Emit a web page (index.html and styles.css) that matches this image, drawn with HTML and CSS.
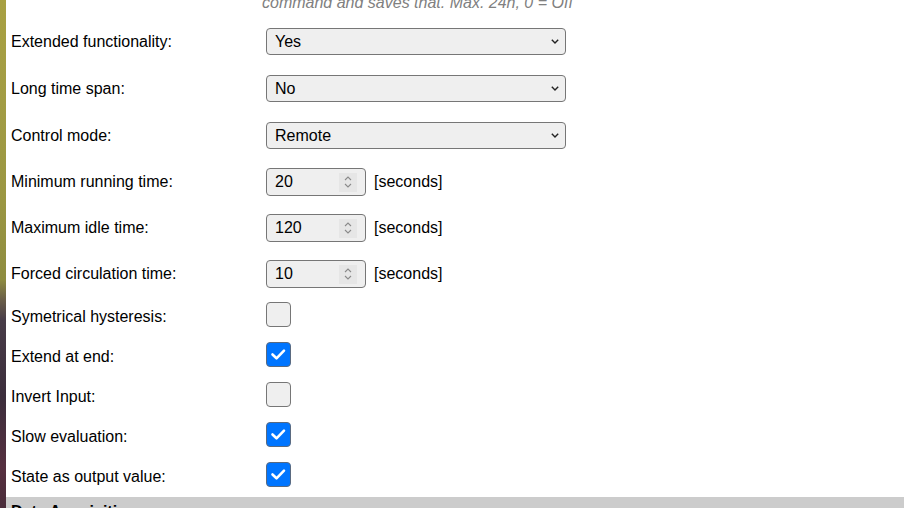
FILE: index.html
```html
<!DOCTYPE html>
<html>
<head>
<meta charset="utf-8">
<link rel="stylesheet" href="styles.css">
</head>
<body>
<div class="page">
  <div class="strip"></div>
  <div class="panel">
    <div class="hint">command and saves that. Max. 24h, 0 = Off</div>
    <div class="form">
      <div class="row row-select">
        <div class="label">Extended functionality:</div>
        <div class="select"><span>Yes</span><svg class="chev" width="8" height="5" viewBox="0 0 8 5"><path d="M0.8 0.8 L4 4 L7.2 0.8" fill="none" stroke="#222" stroke-width="1.4"/></svg></div>
      </div>
      <div class="row row-select">
        <div class="label">Long time span:</div>
        <div class="select"><span>No</span><svg class="chev" width="8" height="5" viewBox="0 0 8 5"><path d="M0.8 0.8 L4 4 L7.2 0.8" fill="none" stroke="#222" stroke-width="1.4"/></svg></div>
      </div>
      <div class="row row-select row-last-select">
        <div class="label">Control mode:</div>
        <div class="select"><span>Remote</span><svg class="chev" width="8" height="5" viewBox="0 0 8 5"><path d="M0.8 0.8 L4 4 L7.2 0.8" fill="none" stroke="#222" stroke-width="1.4"/></svg></div>
      </div>
      <div class="row row-num">
        <div class="label">Minimum running time:</div>
        <div class="ctrl">
          <div class="num"><span>20</span><span class="spin"><svg width="10" height="14" viewBox="0 0 10 14"><path d="M2 5 L5 2 L8 5 M2 9 L5 12 L8 9" fill="none" stroke="#8a8a8a" stroke-width="1.1"/></svg></span></div>
          <span class="unit">[seconds]</span>
        </div>
      </div>
      <div class="row row-num">
        <div class="label">Maximum idle time:</div>
        <div class="ctrl">
          <div class="num"><span>120</span><span class="spin"><svg width="10" height="14" viewBox="0 0 10 14"><path d="M2 5 L5 2 L8 5 M2 9 L5 12 L8 9" fill="none" stroke="#8a8a8a" stroke-width="1.1"/></svg></span></div>
          <span class="unit">[seconds]</span>
        </div>
      </div>
      <div class="row row-num row-last-num">
        <div class="label">Forced circulation time:</div>
        <div class="ctrl">
          <div class="num"><span>10</span><span class="spin"><svg width="10" height="14" viewBox="0 0 10 14"><path d="M2 5 L5 2 L8 5 M2 9 L5 12 L8 9" fill="none" stroke="#8a8a8a" stroke-width="1.1"/></svg></span></div>
          <span class="unit">[seconds]</span>
        </div>
      </div>
      <div class="row row-check">
        <div class="label">Symetrical hysteresis:</div>
        <span class="check"></span>
      </div>
      <div class="row row-check">
        <div class="label">Extend at end:</div>
        <span class="check checked"><svg width="25" height="25" viewBox="0 0 25 25"><path d="M6.5 12.5 L10.5 16.3 L18 8.7" fill="none" stroke="#fff" stroke-width="2.6" stroke-linecap="round" stroke-linejoin="round"/></svg></span>
      </div>
      <div class="row row-check">
        <div class="label">Invert Input:</div>
        <span class="check"></span>
      </div>
      <div class="row row-check">
        <div class="label">Slow evaluation:</div>
        <span class="check checked"><svg width="25" height="25" viewBox="0 0 25 25"><path d="M6.5 12.5 L10.5 16.3 L18 8.7" fill="none" stroke="#fff" stroke-width="2.6" stroke-linecap="round" stroke-linejoin="round"/></svg></span>
      </div>
      <div class="row row-check row-last-check">
        <div class="label">State as output value:</div>
        <span class="check checked"><svg width="25" height="25" viewBox="0 0 25 25"><path d="M6.5 12.5 L10.5 16.3 L18 8.7" fill="none" stroke="#fff" stroke-width="2.6" stroke-linecap="round" stroke-linejoin="round"/></svg></span>
      </div>
    </div>
    <div class="section">Data Acquisition</div>
  </div>
</div>
</body>
</html>
```
FILE: styles.css
```css
html, body {
  margin: 0;
  padding: 0;
  height: 100%;
  overflow: hidden;
}
body {
  font-family: "Liberation Sans", Arial, sans-serif;
  font-size: 16px;
  color: #000;
  background: #fff;
}
.page {
  display: flex;
  height: 508px;
}
.strip {
  width: 6px;
  flex: none;
  background: linear-gradient(to bottom, #a8a042 0%, #a29c44 20%, #9a9642 40%, #8e8c40 55%, #6a5e48 59%, #483c48 63%, #3c2e3c 78%, #563040 92%, #4a2c3a 100%);
}
.panel {
  flex: 1;
  background: #fff;
  display: flex;
  flex-direction: column;
  overflow: hidden;
}
.hint {
  font-style: italic;
  color: #808080;
  line-height: 18px;
  margin-top: -6px;
  padding-left: 256px;
  white-space: nowrap;
}
.form {
  padding-left: 5px;
  padding-top: 16px;
  display: flex;
  flex-direction: column;
}
.row {
  display: grid;
  grid-template-columns: 255px 1fr;
  align-items: center;
}
.label {
  line-height: 18px;
}
.row-select {
  margin-bottom: 20px;
}
.row-last-select {
  margin-bottom: 19px;
}
.row-num {
  margin-bottom: 18px;
}
.row-last-num {
  margin-bottom: 14px;
}
.row-check {
  margin-bottom: 15px;
}
.row-check .label {
  padding-top: 5px;
}
.row-last-check {
  margin-bottom: 10px;
}
.select {
  box-sizing: border-box;
  width: 300px;
  height: 27px;
  border: 1px solid #767676;
  border-radius: 4px;
  background: #efefef;
  display: flex;
  align-items: center;
  justify-content: space-between;
  padding: 0 6px 0 8px;
  line-height: 18px;
}
.chev {
  display: block;
}
.ctrl {
  display: flex;
  align-items: center;
  gap: 8px;
}
.num {
  box-sizing: border-box;
  width: 100px;
  height: 28px;
  border: 1px solid #767676;
  border-radius: 4px;
  background: #efefef;
  display: flex;
  align-items: center;
  justify-content: space-between;
  padding: 0 8px 0 8px;
  line-height: 18px;
}
.spin {
  width: 18px;
  height: 19px;
  background: #e6e6e6;
  display: flex;
  align-items: center;
  justify-content: center;
}
.spin svg {
  display: block;
}
.unit {
  line-height: 18px;
}
.check {
  box-sizing: border-box;
  display: block;
  width: 25px;
  height: 25px;
  border: 1px solid #767676;
  border-radius: 4px;
  background: #efefef;
}
.check.checked {
  background: #0075ff;
  border-color: #5a6a80;
}
.check.checked svg {
  display: block;
  margin: -1px;
}
.section {
  background: #cccccc;
  padding: 6px 5px;
  font-weight: bold;
  line-height: 18px;
  flex: none;
}
```
